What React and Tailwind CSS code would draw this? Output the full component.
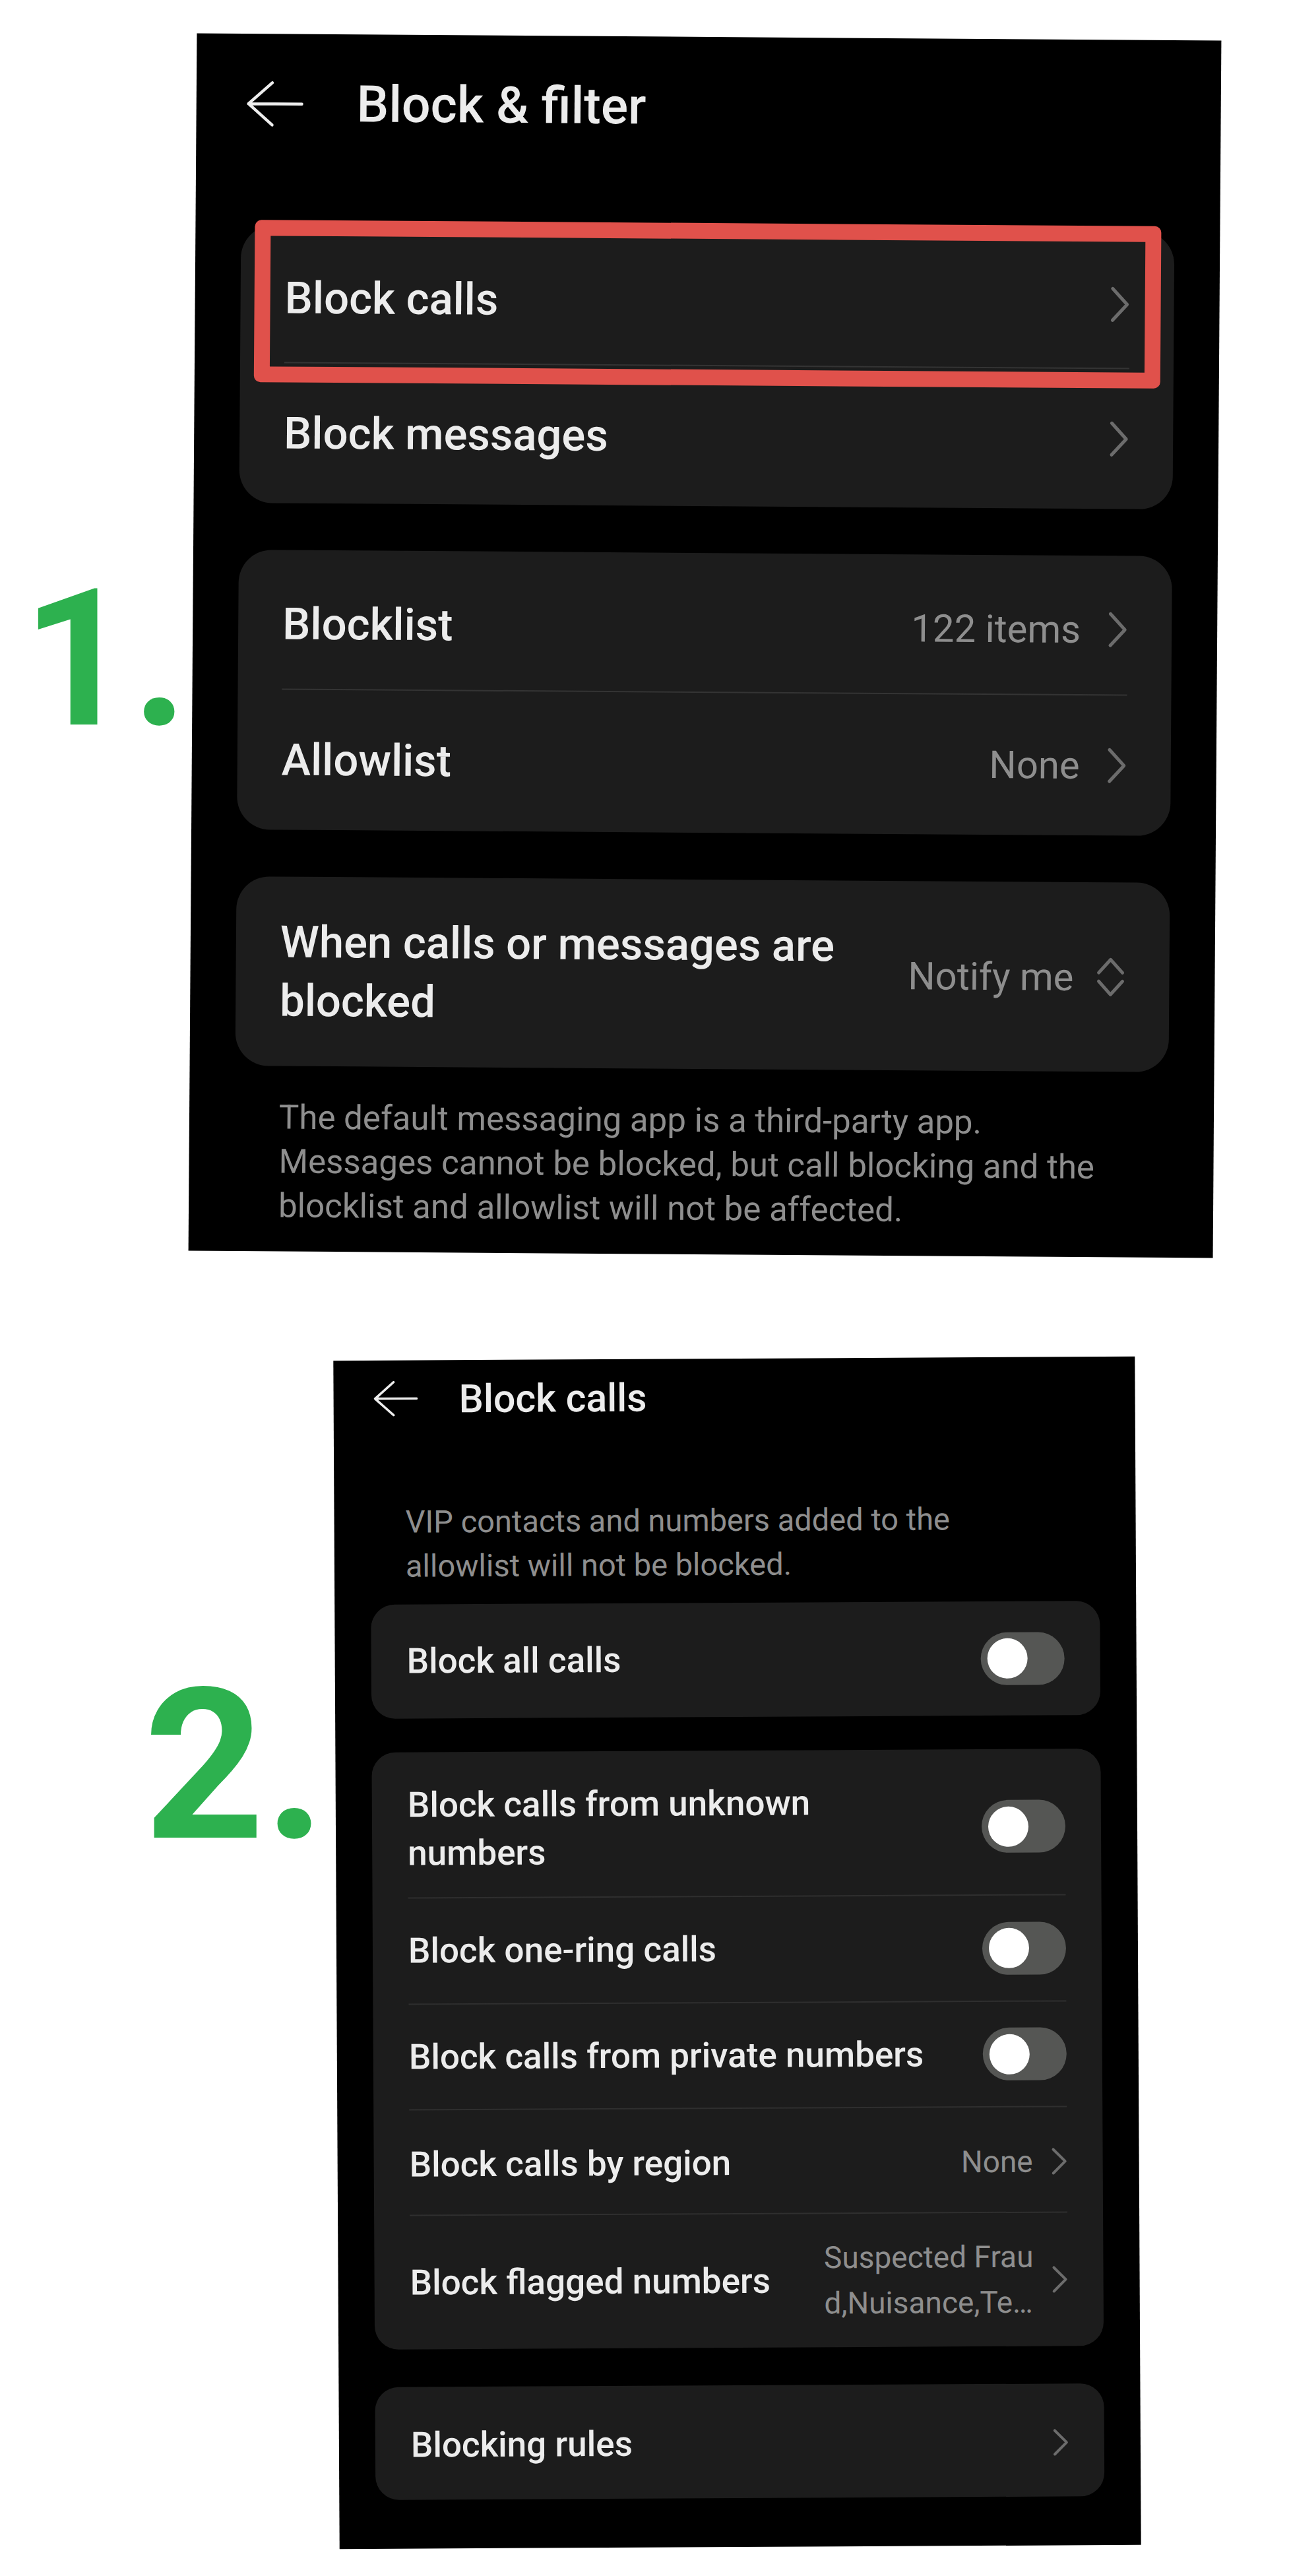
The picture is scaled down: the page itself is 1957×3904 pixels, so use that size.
import React from 'react';

function BackArrow({ big }) {
  if (big) {
    return (
      <svg viewBox="0 0 87 70" className="w-[87px] h-[70px] shrink-0" fill="none" stroke="#ededed" strokeWidth="4.5" strokeLinecap="round" strokeLinejoin="round">
        <path d="M85 35H4M40 3L4 35L40 67" />
      </svg>
    );
  }
  return (
    <svg viewBox="0 0 68 54" className="w-[68px] h-[54px] shrink-0" fill="none" stroke="#ededed" strokeWidth="3.5" strokeLinecap="round" strokeLinejoin="round">
      <path d="M66 27H3M31 2L3 27L31 52" />
    </svg>
  );
}

function Chevron({ big, className = '' }) {
  if (big) {
    return (
      <svg viewBox="0 0 30 56" className={`w-[30px] h-[56px] shrink-0 ${className}`} fill="none" stroke="#6c6c6c" strokeWidth="5" strokeLinecap="round" strokeLinejoin="round">
        <path d="M4 4L26 28L4 52" />
      </svg>
    );
  }
  return (
    <svg viewBox="0 0 24 42" className={`w-[24px] h-[42px] shrink-0 ${className}`} fill="none" stroke="#6c6c6c" strokeWidth="4" strokeLinecap="round" strokeLinejoin="round">
      <path d="M3 3L21 21L3 39" />
    </svg>
  );
}

function UpDown() {
  return (
    <svg viewBox="0 0 44 61" className="w-[44px] h-[61px] shrink-0 ml-[34px]" fill="none" stroke="#6c6c6c" strokeWidth="5" strokeLinecap="round" strokeLinejoin="round">
      <path d="M4 24L22 4L40 24M4 37L22 57L40 37" />
    </svg>
  );
}

function Toggle() {
  return (
    <div className="w-[127px] h-[80px] rounded-full bg-[#555654] flex items-center pl-[10px] shrink-0">
      <div className="w-[61px] h-[61px] rounded-full bg-white" />
    </div>
  );
}

function BlockFilterScreen() {
  return (
    <div className="mt-[56px] w-[1553px] h-[1845px] bg-black rotate-[0.4deg] shrink-0 text-[#ececec]">
      {/* Header */}
      <header className="h-[212px] flex items-center pl-[75px]">
        <BackArrow big />
        <h1 className="ml-[81px] text-[77px] leading-none font-medium">Block &amp; filter</h1>
      </header>

      <div className="px-[69px]">
        {/* Block calls / messages */}
        <div className="relative mt-[78px] rounded-[50px] bg-[#1c1c1c]">
          <div className="h-[209px] pt-[14px] mx-[67px] flex items-center justify-between border-b-2 border-[#343434]">
            <span className="text-[67px] leading-none font-medium">Block calls</span>
            <Chevron big />
          </div>
          <div className="h-[212px] px-[67px] flex items-center justify-between">
            <span className="text-[67px] leading-none font-medium">Block messages</span>
            <Chevron big />
          </div>
          {/* highlight */}
          <div className="absolute left-[21px] top-[-8px] w-[1374px] h-[246px] border-[24px] border-[#e0514b] rounded-[10px]" />
        </div>

        {/* Lists */}
        <div className="mt-[71px] rounded-[50px] bg-[#1c1c1c]">
          <div className="h-[212px] pt-[14px] mx-[67px] flex items-center justify-between border-b-2 border-[#343434]">
            <span className="text-[67px] leading-none font-medium">Blocklist</span>
            <div className="flex items-center">
              <span className="text-[58px] leading-none text-[#8e8e8e]">122 items</span>
              <Chevron big className="ml-[41px]" />
            </div>
          </div>
          <div className="h-[212px] px-[67px] flex items-center justify-between">
            <span className="text-[67px] leading-none font-medium">Allowlist</span>
            <div className="flex items-center">
              <span className="text-[58px] leading-none text-[#8e8e8e]">None</span>
              <Chevron big className="ml-[41px]" />
            </div>
          </div>
        </div>

        {/* Notify */}
        <div className="mt-[71px] h-[287px] rounded-[50px] bg-[#1c1c1c] px-[67px] flex items-center justify-between">
          <div className="text-[67px] leading-[89px] font-medium">
            When calls or messages are
            <br />
            blocked
          </div>
          <div className="flex items-center">
            <span className="text-[58px] leading-none text-[#8e8e8e]">Notify me</span>
            <UpDown />
          </div>
        </div>

        <p className="mt-[44px] pl-[67px] text-[51px] leading-[67px] text-[#8e8e8e] whitespace-nowrap">
          The default messaging app is a third-party app.
          <br />
          Messages cannot be blocked, but call blocking and the
          <br />
          blocklist and allowlist will not be affected.
        </p>
      </div>
    </div>
  );
}

function BlockCallsScreen() {
  const label = 'text-[53px] leading-[73px] font-medium whitespace-nowrap';
  const value = 'text-[46px] leading-[69px] text-[#8e8e8e] whitespace-nowrap';
  return (
    <div className="w-[1215px] h-[1801px] bg-black -rotate-[0.3deg] shrink-0 text-[#ececec]">
      <header className="h-[116px] flex items-center pl-[60px]">
        <BackArrow />
        <h1 className="ml-[62px] text-[59px] leading-none font-medium">Block calls</h1>
      </header>

      <p className="mt-[95px] pl-[108px] text-[47px] leading-[67px] text-[#8e8e8e] whitespace-nowrap">
        VIP contacts and numbers added to the
        <br />
        allowlist will not be blocked.
      </p>

      <div className="px-[55px]">
        <div className="mt-[25px] h-[173px] rounded-[36px] bg-[#1c1c1c] px-[54px] flex items-center justify-between">
          <span className={label}>Block all calls</span>
          <Toggle />
        </div>

        <div className="mt-[51px] rounded-[36px] bg-[#1c1c1c]">
          <div className="h-[222px] pt-[14px] mx-[54px] flex items-center justify-between border-b-2 border-[#2f2f2f]">
            <span className={label}>
              Block calls from unknown
              <br />
              numbers
            </span>
            <Toggle />
          </div>
          <div className="h-[161px] mx-[54px] flex items-center justify-between border-b-2 border-[#2f2f2f]">
            <span className={label}>Block one-ring calls</span>
            <Toggle />
          </div>
          <div className="h-[160px] mx-[54px] flex items-center justify-between border-b-2 border-[#2f2f2f]">
            <span className={label}>Block calls from private numbers</span>
            <Toggle />
          </div>
          <div className="h-[160px] pt-[6px] mx-[54px] flex items-center justify-between border-b-2 border-[#2f2f2f]">
            <span className={label}>Block calls by region</span>
            <div className="flex items-center">
              <span className={value}>None</span>
              <Chevron className="ml-[28px]" />
            </div>
          </div>
          <div className="h-[202px] mx-[54px] flex items-center justify-between">
            <span className={label}>Block flagged numbers</span>
            <div className="flex items-center">
              <div className={value}>
                Suspected Frau
                <br />
                d,Nuisance,Te…
              </div>
              <Chevron className="ml-[28px]" />
            </div>
          </div>
        </div>

        <div className="mt-[57px] h-[171px] pt-[6px] rounded-[36px] bg-[#1c1c1c] px-[54px] flex items-center justify-between">
          <span className={label}>Blocking rules</span>
          <Chevron />
        </div>
      </div>
    </div>
  );
}

export default function App() {
  return (
    <div className="w-[1957px] h-[3904px] bg-white overflow-hidden font-['Roboto',sans-serif]">
      {/* Step 1 */}
      <section className="flex">
        <div className="w-[292px] shrink-0 pt-[854px] pl-[34px] text-[290px] leading-none font-bold text-[#2db14f] whitespace-nowrap">
          1.
        </div>
        <BlockFilterScreen />
      </section>

      {/* Step 2 */}
      <section className="flex mt-[158px]">
        <div className="w-[510px] shrink-0 pt-[458px] pl-[218px] text-[319px] leading-none font-bold text-[#2db14f] whitespace-nowrap">
          2.
        </div>
        <BlockCallsScreen />
      </section>
    </div>
  );
}
